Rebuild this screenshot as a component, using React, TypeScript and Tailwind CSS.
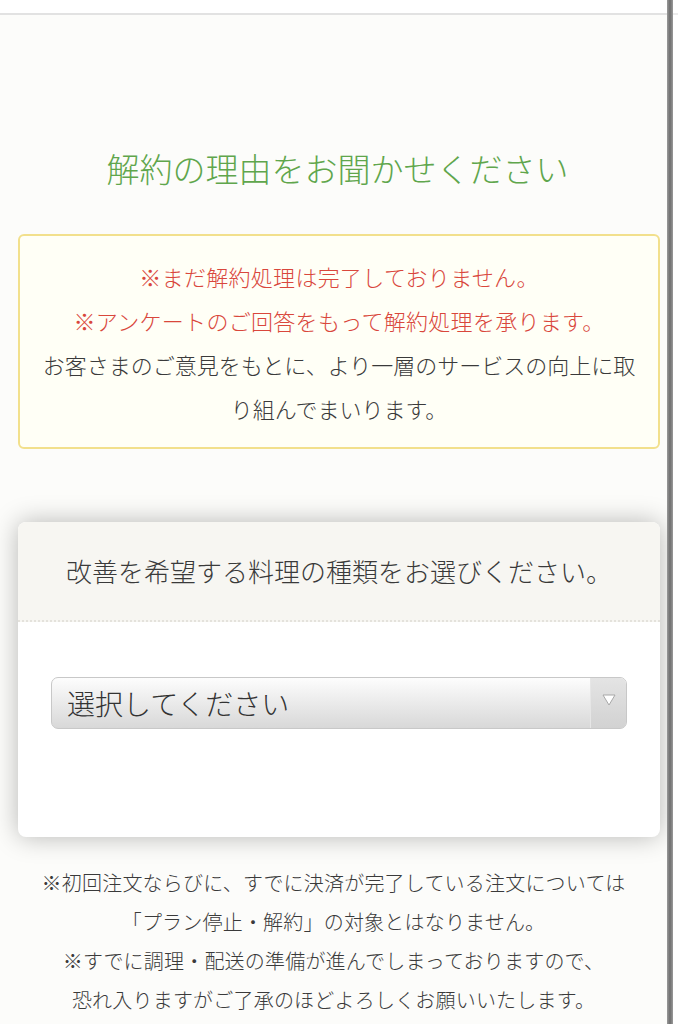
import React from "react";

const font = { fontFamily: '"Noto Sans CJK JP", "Noto Sans", sans-serif' };

export default function App() {
  return (
    <div className="flex w-[678px] min-h-[1024px] bg-white" style={font}>
      <div className="w-[667px] flex flex-col">
        <div className="h-[13px] bg-white" />
        <div className="h-[2px] bg-[#e2e2e2]" />
        <div className="flex-1 bg-[#fcfcfa] flex flex-col items-center pb-10 font-light">
          <h1 className="mt-[129px] pl-[8px] text-[33px] leading-[48px] text-[#5fa64c] font-light">
            解約の理由をお聞かせください
          </h1>

          <div className="mt-[42px] w-[642px] self-start ml-[18px] rounded-[6px] border-2 border-[#f2e08c] bg-[#fffff6] px-[18px] pt-[18px] pb-[17px] text-center text-[22px] leading-[44px] tracking-[0.3px]">
            <p className="text-[#d9473c]">※まだ解約処理は完了しておりません。</p>
            <p className="text-[#d9473c]">※アンケートのご回答をもって解約処理を承ります。</p>
            <p className="text-[#3a3a3a] tracking-normal">
              お客さまのご意見をもとに、より一層のサービスの向上に取り組んでまいります。
            </p>
          </div>

          <div className="mt-[73px] self-start ml-[18px] w-[642px] rounded-[8px] bg-white shadow-[0_0_26px_rgba(0,0,0,0.28)] overflow-hidden">
            <div className="h-[100px] bg-[#f7f6f2] border-b-2 border-dotted border-[#e4e2dc] flex items-center justify-center">
              <p className="text-[26px] text-[#3a3a3a] leading-[40px]">
                改善を希望する料理の種類をお選びください。
              </p>
            </div>
            <div className="px-[33px] pt-[55px] pb-[108px]">
              <div className="h-[52px] flex rounded-[7px] border border-[#c8c8c8] bg-gradient-to-b from-[#fdfdfd] to-[#d8d8d8] overflow-hidden">
                <div className="flex-1 flex items-center pl-[15px] text-[28px] text-[#333333]">
                  選択してください
                </div>
                <div className="w-[36px] border-l border-[#e6e6e6] bg-gradient-to-b from-[#e4e4e4] to-[#d2d2d2] flex items-center justify-center pb-[6px]">
                  <svg width="16" height="14" viewBox="0 0 16 14">
                    <polygon points="2,2 14,2 8,12" fill="#ffffff" stroke="#a8a8a8" strokeWidth="1" strokeLinejoin="round" />
                  </svg>
                </div>
              </div>
            </div>
          </div>

          <div className="mt-[26px] text-center text-[20px] leading-[39px] text-[#3a3a3a] tracking-[0.2px]">
            <p>※初回注文ならびに、すでに決済が完了している注文については</p>
            <p>「プラン停止・解約」の対象とはなりません。</p>
            <p>※すでに調理・配送の準備が進んでしまっておりますので、</p>
            <p>恐れ入りますがご了承のほどよろしくお願いいたします。</p>
          </div>
        </div>
      </div>
      <div className="w-[6px] bg-gradient-to-r from-[#9a9a9a] via-[#6e6e6e] to-[#9a9a9a]" />
      <div className="flex-1 flex flex-col">
        <div className="h-[13px] bg-white" />
        <div className="h-[2px] bg-[#ececec]" />
        <div className="flex-1 bg-white" />
      </div>
    </div>
  );
}
